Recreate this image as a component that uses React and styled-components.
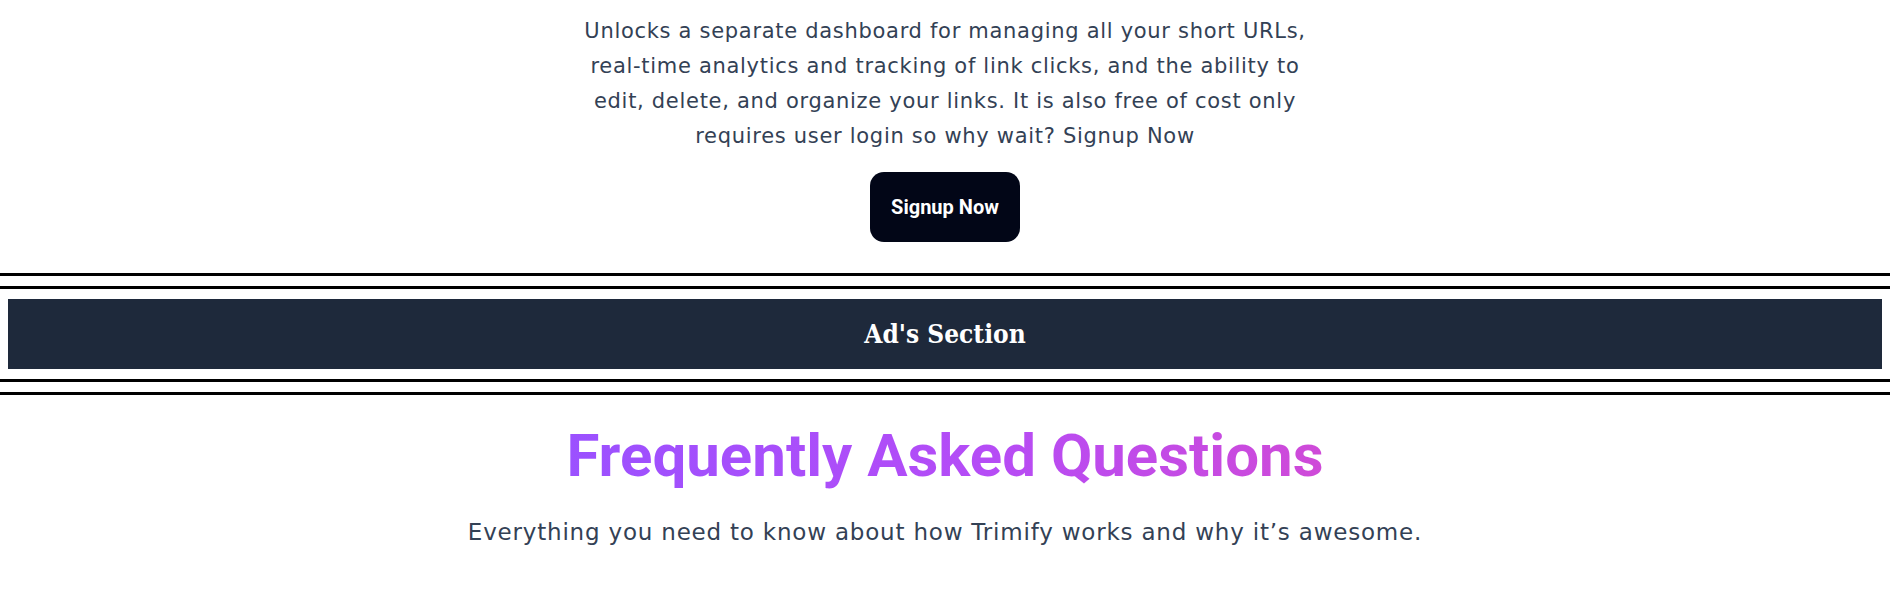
import React from "react";
import styled, { createGlobalStyle } from "styled-components";

const GlobalStyle = createGlobalStyle`
  body {
    margin: 0;
    background: #ffffff;
    font-family: "DejaVu Sans", "Open Sans", sans-serif;
  }
`;

const Page = styled.main`
  display: flex;
  flex-direction: column;
`;

const Promo = styled.section`
  display: flex;
  flex-direction: column;
  align-items: center;
  padding-top: 14px;
`;

const PromoText = styled.p`
  margin: 0;
  max-width: 760px;
  text-align: center;
  font-family: "DejaVu Sans", sans-serif;
  font-size: 21px;
  letter-spacing: 0.7px;
  line-height: 35px;
  color: #334155;
`;

const SignupButton = styled.button`
  margin-top: 18px;
  height: 70px;
  padding: 0 21px;
  border: none;
  border-radius: 14px;
  background: #020617;
  color: #ffffff;
  font-family: Roboto, "Liberation Sans", sans-serif;
  font-weight: 700;
  font-size: 20px;
  cursor: pointer;
`;

const AdBlock = styled.section`
  display: flex;
  flex-direction: column;
  gap: 10px;
  margin-top: 31px;
`;

const Rule = styled.div`
  height: 3px;
  background: #000000;
`;

const AdBanner = styled.div`
  margin: 0 8px;
  height: 70px;
  display: flex;
  align-items: center;
  justify-content: center;
  background: #1e293b;
  color: #ffffff;
  font-family: "DejaVu Serif Condensed", "DejaVu Serif", serif;
  font-weight: 700;
  font-size: 26px;
`;

const Faq = styled.section`
  display: flex;
  flex-direction: column;
  align-items: center;
  margin-top: 25px;
`;

const FaqTitle = styled.h2`
  margin: 0;
  display: inline-block;
  font-family: Roboto, "Liberation Sans", sans-serif;
  font-weight: 700;
  font-size: 60px;
  line-height: 72px;
  background: linear-gradient(to right, #9b51ff, #b54cf6 55%, #cf4ad8);
  -webkit-background-clip: text;
  background-clip: text;
  color: transparent;
`;

const FaqLead = styled.p`
  margin: 26px 0 0;
  text-align: center;
  font-family: "DejaVu Sans", sans-serif;
  font-size: 23px;
  letter-spacing: 0.8px;
  line-height: 28px;
  color: #334155;
`;

export default function App() {
  return (
    <>
      <GlobalStyle />
      <Page>
        <Promo>
          <PromoText>
            Unlocks a separate dashboard for managing all your short URLs,
            real-time analytics and tracking of link clicks, and the ability to
            edit, delete, and organize your links. It is also free of cost only
            requires user login so why wait? Signup Now
          </PromoText>
          <SignupButton>Signup Now</SignupButton>
        </Promo>

        <AdBlock>
          <Rule />
          <Rule />
          <AdBanner>Ad's Section</AdBanner>
          <Rule />
          <Rule />
        </AdBlock>

        <Faq>
          <FaqTitle>Frequently Asked Questions</FaqTitle>
          <FaqLead>
            Everything you need to know about how Trimify works and why it’s awesome.
          </FaqLead>
        </Faq>
      </Page>
    </>
  );
}
